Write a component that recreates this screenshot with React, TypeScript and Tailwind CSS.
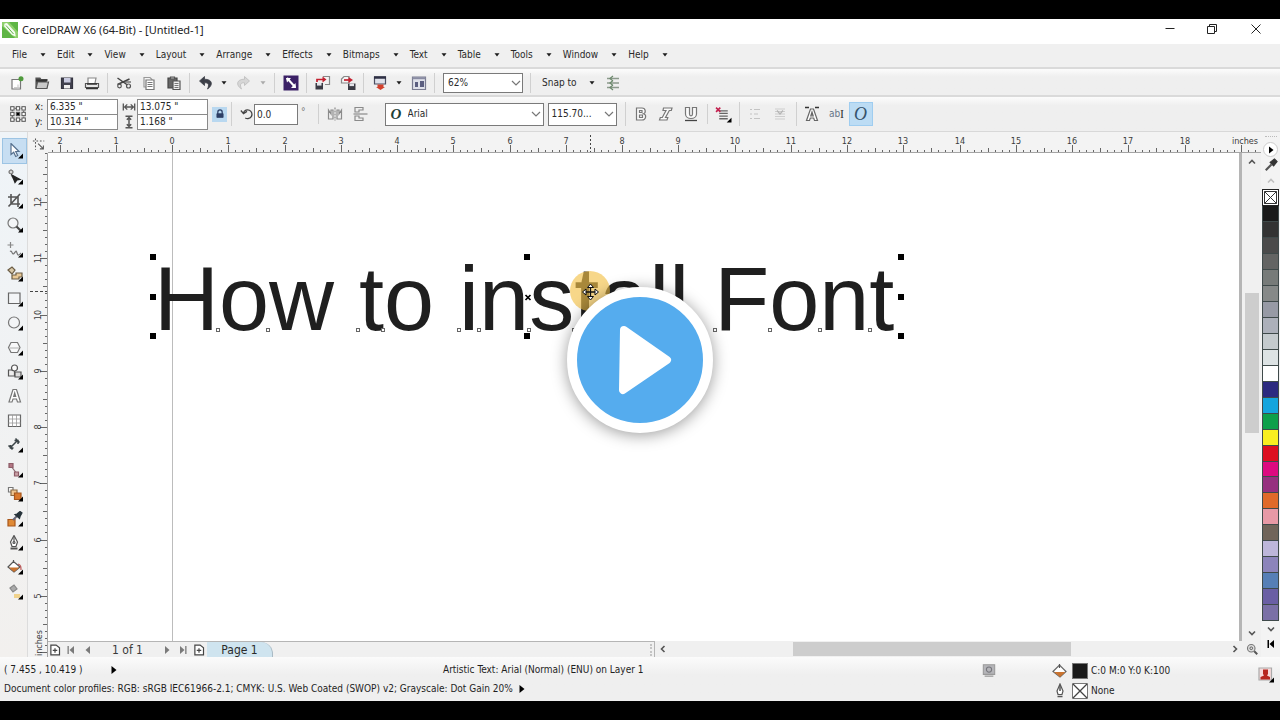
import type { ReactNode } from "react";

const INK = "#555555";
const DARK = "#222222";

type IconProps = { children: ReactNode; className?: string };

function Icon({ children, className = "size-4" }: IconProps) {
  return (
    <svg viewBox="0 0 16 16" className={className} fill="none" stroke={INK} strokeWidth="1.2" aria-hidden="true">
      {children}
    </svg>
  );
}

function Caret({ faded = false }: { faded?: boolean }) {
  return (
    <svg viewBox="0 0 6 4" className="h-1 w-1.5 shrink-0" aria-hidden="true">
      <path d="M0.5 0.3h5L3 3.5z" fill={faded ? "#aaaaaa" : "#1c1c1c"} />
    </svg>
  );
}

function Chevron({ dir, color = "#555555" }: { dir: "up" | "down" | "left" | "right"; color?: string }) {
  const d = {
    up: "M2 6.5 5 3.5 8 6.5",
    down: "M2 3.5 5 6.5 8 3.5",
    left: "M6.5 2 3.5 5 6.5 8",
    right: "M3.5 2 6.5 5 3.5 8",
  }[dir];
  return (
    <svg viewBox="0 0 10 10" className="size-2.5 shrink-0" fill="none" stroke={color} strokeWidth="1.6" aria-hidden="true">
      <path d={d} />
    </svg>
  );
}

function SelectChevron() {
  return (
    <svg viewBox="0 0 10 10" className="size-2.5 shrink-0" fill="none" stroke="#777777" strokeWidth="1.2" aria-hidden="true">
      <path d="M1 3l4 4 4-4" />
    </svg>
  );
}

function Sep({ className = "mx-[3px] h-5" }: { className?: string }) {
  return <span className={`w-px shrink-0 bg-[#d0d0d0] ${className}`} />;
}

function Tool({ label, children, width = "w-[25px]" }: { label: string; children: ReactNode; width?: string }) {
  return (
    <button type="button" aria-label={label} className={`flex h-6 shrink-0 items-center justify-center ${width}`}>
      {children}
    </button>
  );
}

const disk = (x: number, y: number) => (
  <g transform={`translate(${x} ${y})`}>
    <path d="M0 0h7.5v6.5H0z" fill="#3a3a44" stroke="none" />
    <path d="M1.5 0h4.5v2.6H1.5z" fill="#e4e4ea" stroke="none" />
  </g>
);

const menus = ["File", "Edit", "View", "Layout", "Arrange", "Effects", "Bitmaps", "Text", "Table", "Tools", "Window", "Help"];

function TitleBar() {
  return (
    <header className="flex h-[25px] shrink-0 items-center bg-white text-[#222222]">
      <svg viewBox="0 0 16 16" className="mb-1 ml-0.5 size-4" aria-hidden="true">
        <path d="M0 0h16v16H0z" fill="#5fb545" />
        <path d="M0 0h7L16 10v6h-3L0 4z" fill="#8fd06c" />
        <path d="M2.5 1.5 5 1l8 9 .8 4.5L10 13 2 4.2z" fill="#f4fbf0" />
        <path d="m4 3.5 7.5 8.5" stroke="#5fb545" strokeWidth="1" />
      </svg>
      <h1 className="ml-1 pb-[3px] font-['Noto_Sans','Open_Sans',sans-serif] text-[11px] leading-4">CorelDRAW X6 (64-Bit) - [Untitled-1]</h1>
      <div className="mr-0.5 ml-auto flex items-center pb-1.5">
        <button type="button" aria-label="Minimize" className="flex h-5 w-[42px] items-center justify-center">
          <svg viewBox="0 0 12 12" className="size-3" stroke={DARK} aria-hidden="true"><path d="M1.5 5.5h9" /></svg>
        </button>
        <button type="button" aria-label="Restore" className="flex h-5 w-[42px] items-center justify-center">
          <svg viewBox="0 0 12 12" className="size-3" fill="none" stroke={DARK} aria-hidden="true">
            <path d="M1.5 3.5h7v7h-7zM3.5 3.5v-2h7v7h-2" />
          </svg>
        </button>
        <button type="button" aria-label="Close" className="flex h-5 w-[45px] items-center justify-center">
          <svg viewBox="0 0 12 12" className="size-3" stroke={DARK} aria-hidden="true"><path d="m1.5 1.5 9 9m0-9-9 9" /></svg>
        </button>
      </div>
    </header>
  );
}

function MenuBar() {
  return (
    <nav className="flex h-[25px] shrink-0 items-center border-b-2 border-[#dadada] bg-[#f0f0f0] pb-0.5 pl-3">
      {menus.map((name) => (
        <button key={name} type="button" className="flex items-center gap-[13px] pr-[11px]">
          {name}
          <Caret />
        </button>
      ))}
    </nav>
  );
}

function StandardBar() {
  return (
    <div className="flex h-7 shrink-0 items-center border-b-2 border-[#dadada] bg-linear-to-b from-[#fcfcfc] to-[#efefef] to-30% pt-0.5 pl-1">
      <Tool label="New">
        <Icon>
          <path d="M3 4.5h8.500v9.500H3z" fill="#fff" stroke="#777" />
          <path d="M9 9.5v4M5 12.5h6" stroke="#ccc" />
          <circle cx="12" cy="3.8" r="2.5" fill="#4f9a3c" stroke="none" />
        </Icon>
      </Tool>
      <Tool label="Open">
        <Icon>
          <path d="M2 13V3h4l1 1.5h6V6" fill="#555" />
          <path d="M3.5 7h11l-1.5 6.5H2z" fill="#c9c9c9" />
          <path d="M2 5.5h11" stroke="#333" strokeWidth="2" />
        </Icon>
      </Tool>
      <Tool label="Save">
        <Icon>
          <path d="M2.5 3h11v10.5h-11z" fill="#41414e" stroke="#33333f" />
          <path d="M5 3h6.500v4.500H5z" fill="#c9cbe0" stroke="none" />
          <path d="M5 10h6v3.500H5z" fill="#f0f0f0" stroke="none" />
        </Icon>
      </Tool>
      <Tool label="Print">
        <Icon>
          <path d="M4 8V3h8l-1 5" fill="#fff" stroke="#888" />
          <path d="M1.5 8.500h13v4h-13z" fill="#e8e8e8" stroke="#555" />
          <path d="M2 13.500h12M3 9h10" stroke="#333" strokeWidth="1.5" />
        </Icon>
      </Tool>
      <Sep />
      <Tool label="Cut">
        <Icon>
          <path d="m1.5 3 10 7M1.5 9.500l12-5.500" stroke="#444" strokeWidth="1.5" />
          <circle cx="12.500" cy="11" r="2" />
          <circle cx="3.5" cy="11" r="1.8" />
          <path d="M9 7h6" />
        </Icon>
      </Tool>
      <Tool label="Copy">
        <Icon>
          <path d="M3 2.500h6l2 2V12H3z" fill="#f4f4f4" stroke="#999" />
          <path d="M5 5h8v9.500H5z" fill="#fff" stroke="#777" />
          <path d="M6.500 7.500h5m-5 2h5m-5 2h5" stroke="#777" />
        </Icon>
      </Tool>
      <Tool label="Paste">
        <Icon>
          <path d="M2 3h9v10H2z" fill="#666" stroke="#444" />
          <path d="M4.500 2h4v2h-4z" fill="#bbb" />
          <path d="M7 6h7v8.500H7z" fill="#eee" />
          <path d="M8.500 8.500h4m-4 2h4m-4 2h4" stroke="#777" />
        </Icon>
      </Tool>
      <Sep />
      <Tool label="Undo">
        <Icon><path d="M6.500 1.500 1.500 6l5 4.500V7.800c4-.3 5 1.700 3 6.200 6-4 5-9.800-3-9.800z" fill="#3c3f48" stroke="#3c3f48" strokeWidth=".8" /></Icon>
      </Tool>
      <Tool label="Undo history" width="w-3"><Caret /></Tool>
      <Tool label="Redo">
        <Icon><path d="m9.500 1.500 5 4.500-5 4.500V7.800c-4-.3-5 1.700-3 6.200-6-4-5-9.800 3-9.800z" fill="#d6d6d6" stroke="#bbb" strokeWidth=".8" /></Icon>
      </Tool>
      <Tool label="Redo history" width="w-4"><Caret faded /></Tool>
      <Sep />
      <Tool label="Search content">
        <Icon>
          <path d="M.5.5h15v15H.5z" fill="#3b2166" stroke="none" />
          <path d="m4 3 8 9" stroke="#fff" strokeWidth="2" />
          <path d="M3 3h5L4 7.500zM13 13H8l4.500-5z" fill="#fff" stroke="none" />
        </Icon>
      </Tool>
      <Sep />
      <Tool label="Import">
        <Icon>
          {disk(0.5, 8)}
          <path d="M8 1.500h6.500v8H10" fill="#f3f3f3" stroke="#888" />
          <path d="M2 7V4.500h6" stroke="#c3202f" strokeWidth="1.7" />
          <path d="m7.500 1.500 4 3-4 3z" fill="#c3202f" stroke="none" />
        </Icon>
      </Tool>
      <Tool label="Export">
        <Icon>
          {disk(8, 8.5)}
          <path d="M1.500 8V4L4 1.500h5V8z" fill="#f3f3f3" stroke="#888" />
          <path d="M4 5h5" stroke="#c3202f" strokeWidth="1.7" />
          <path d="m8.500 2 4.500 3-4.500 3z" fill="#c3202f" stroke="none" />
        </Icon>
      </Tool>
      <Sep />
      <Tool label="Publish">
        <Icon>
          <path d="M2.500 2h11v7h-11z" fill="#dfe1ea" stroke="#4b4d60" />
          <path d="M2 2.500h12" stroke="#2f3045" strokeWidth="2.5" />
          <path d="M5.500 9.500h6V12h1.500l-4.500 3-4.500-3h1.500z" fill="#d2402c" stroke="none" />
        </Icon>
      </Tool>
      <Tool label="Publish options" width="w-[14px]"><Caret /></Tool>
      <Tool label="Welcome screen">
        <Icon>
          <path d="M1.500 2h13v12.500h-13z" fill="#dfe1ea" stroke="#7b7d92" />
          <path d="M1.500 3.200h13" stroke="#8a8ca3" strokeWidth="2" />
          <path d="M4 7h3v5H4zM9 6h4v6H9z" fill="#5b5e80" stroke="none" />
        </Icon>
      </Tool>
      <Sep />
      <div className="ml-[5px] grid w-20 shrink-0 items-center">
        <select aria-label="Zoom level" className="col-start-1 row-start-1 h-5 appearance-none border border-[#7a7a7a] bg-white pl-1">
          <option>62%</option>
        </select>
        <span className="pointer-events-none col-start-1 row-start-1 mr-0.5 justify-self-end"><SelectChevron /></span>
      </div>
      <Sep className="mx-[7px] h-5" />
      <button type="button" className="ml-1 flex items-center gap-3 whitespace-nowrap">
        Snap to
        <Caret />
      </button>
      <span className="ml-1.5 flex">
        <Tool label="Options">
          <Icon>
            <path d="M2 3.500h12M2 8h12M2 12.500h12" stroke="#8d9a8d" strokeWidth="1.3" />
            <path d="m8 1-3 2.500L8 6m0-.5L5 8l3 2.500M8 10l-3 2.500L8 15" stroke="#6c8a6c" />
          </Icon>
        </Tool>
      </span>
    </div>
  );
}

const field = "h-4 w-[71px] border border-[#8a8a8a] bg-white pl-0.5";

function PropertyBar() {
  return (
    <div className="flex h-[35px] shrink-0 items-center border-b border-[#d8d8d8] bg-linear-to-b from-[#fcfcfc] to-[#efefef] to-25% pl-[5px]">
      <Tool label="Object origin">
        <Icon className="size-[18px]">
          <path d="M3 3h10v10H3z" strokeDasharray="1 1" />
          {[3, 8, 13].flatMap((x) => [3, 8, 13].map((y) => (
            <rect key={`${x}-${y}`} x={x - 1.5} y={y - 1.5} width="3" height="3" fill={x === 8 && y === 8 ? "#000" : "#fff"} strokeWidth=".9" />
          )))}
        </Icon>
      </Tool>
      <div className="ml-[5px] flex flex-col">
        <label className="flex items-center"><span className="w-3">x:</span><input className={field} defaultValue={'6.335 "'} /></label>
        <label className="-mt-px flex items-center"><span className="w-3">y:</span><input className={field} defaultValue={'10.314 "'} /></label>
      </div>
      <div className="ml-1 flex flex-col">
        <label className="flex items-center">
          <Icon className="mr-px size-3.5"><path d="M1.500 4v8m13-8v8M3 8h10M6 5 3 8l3 3m4-6 3 3-3 3" strokeWidth="1.5" /></Icon>
          <input aria-label="Width" className={field} defaultValue={'13.075 "'} />
        </label>
        <label className="-mt-px flex items-center">
          <Icon className="mr-px size-3.5"><path d="M4 1.500h8M4 14.500h8M8 3v10M5.500 5.500 8 3l2.500 2.500m-5 5L8 13l2.500-2.500" strokeWidth="1.7" /></Icon>
          <input aria-label="Height" className={field} defaultValue={'1.168 "'} />
        </label>
      </div>
      <button type="button" aria-label="Lock ratio" className="ml-1 flex size-[15px] items-center justify-center bg-[#b9d8f0]">
        <Icon className="size-2.5"><path d="M4.500 8V5a3.500 3.500 0 0 1 7 0v3" strokeWidth="2" stroke="#2d3f66" /><path d="M3 7.500h10v6H3z" fill="#2d3f66" stroke="#2d3f66" /></Icon>
      </button>
      <Sep className="mx-1 h-6" />
      <label className="ml-1 flex items-center">
        <Icon className="size-[14px]"><path d="M4 6.500a5 5 0 1 1 2 6M1 4l3 3.500L8 5" stroke="#444" strokeWidth="1.5" /></Icon>
        <input aria-label="Rotation" className="h-[21px] w-11 border border-[#7a7a7a] bg-white pl-0.5" defaultValue="0.0" />
        <span className="ml-[3px] pb-1 text-[#777]">°</span>
      </label>
      <Sep className="mr-1 ml-3 h-5" />
      <Tool label="Mirror horizontally"><Icon><path d="M8 1.500v13" strokeDasharray="2 1" stroke="#888" /><path d="M6 4v9H1.500V4L4 8V4zM10 4v9h4.500V4L12 8V4z" stroke="#8a8a8a" /></Icon></Tool>
      <Tool label="Mirror vertically"><Icon><path d="M1.500 8h14" stroke="#888" /><path d="M3 6V1.500h8V4H7v2zM3 10v4.500h8V12H7v-2z" stroke="#8a8a8a" /></Icon></Tool>
      <div className="ml-3 grid w-[159px] shrink-0 items-center">
        <select aria-label="Font" className="col-start-1 row-start-1 h-[23px] appearance-none border border-[#7a7a7a] bg-white pl-[22px]">
          <option>Arial</option>
        </select>
        <span className="pointer-events-none col-start-1 row-start-1 ml-1.5 font-['Liberation_Serif',serif] text-[15px] leading-4 font-bold text-[#1d4038] italic">O</span>
        <span className="pointer-events-none col-start-1 row-start-1 mr-[3px] justify-self-end"><SelectChevron /></span>
      </div>
      <div className="ml-1 grid w-[69px] shrink-0 items-center">
        <select aria-label="Font size" className="col-start-1 row-start-1 h-[23px] appearance-none border border-[#7a7a7a] bg-white pl-[3px]">
          <option>115.70...</option>
        </select>
        <span className="pointer-events-none col-start-1 row-start-1 mr-[3px] justify-self-end"><SelectChevron /></span>
      </div>
      <Sep className="mr-[3px] ml-2 h-6" />
      <Tool label="Bold"><Icon><path d="M3.500 2h5.500c4 0 4 5 1.500 5.800C14 9 13 14 9 14H3.500zM6.500 4.500v2h2.500v-2zM6.500 9v2.500h3V9z" fill="#fafafa" stroke="#777" /></Icon></Tool>
      <Tool label="Italic"><Icon><path d="M5.500 2H14l-.7 2.500h-2L7.500 11.500h2.300L9 14H1.500l.8-2.500h2L8 4.500H5z" fill="#fafafa" stroke="#777" /></Icon></Tool>
      <Tool label="Underline"><Icon><path d="M2.500 1.500h4V8c0 2.500 3 2.500 3 0V1.500h4V8c0 6-11 6-11 0z" fill="#fafafa" stroke="#777" /><path d="M2 14.500h12" stroke="#444" strokeWidth="1.3" /></Icon></Tool>
      <Sep className="mx-[3px] h-5" />
      <Tool label="Text alignment">
        <Icon className="size-[17px]"><path d="M4 4.500h8M4 7h8M4 9.500h8M4 12h8" stroke="#666" /><path d="m1 1.500 4 4m0-4-4 4" stroke="#c3204f" strokeWidth="1.5" /><path d="M15.500 11v4.500H11z" fill="#000" stroke="none" /></Icon>
      </Tool>
      <Sep className="mx-[3px] h-6" />
      <Tool label="Bullets"><Icon><path d="M3 3.500h2m2 0h6M3 8h2m2 0h4M3 12.500h2m2 0h6" stroke="#c3c3c3" /></Icon></Tool>
      <Tool label="Drop cap"><Icon><path d="M3 3h10M3 5.500h10M3 8h10M3 10.500h10M3 13h10" stroke="#cdcdcd" /><path d="M5 4.500 8 8l3-3.500" stroke="#b5b5b5" /></Icon></Tool>
      <Sep className="mx-[3px] h-6" />
      <Tool label="Character formatting">
        <Icon><path d="M6.500 3h3l4 11.500h-3l-.8-2.500H6.300l-.8 2.500h-3zM8 6l-1.200 4h2.400z" fill="#fff" stroke="#666" /><path d="M1 1.500h4m6 0h4" stroke="#333" strokeWidth="1.6" /></Icon>
      </Tool>
      <button type="button" aria-label="Edit text" className="flex size-6 items-center justify-center text-[#667788]">ab<span className="font-['Liberation_Serif',serif] text-[12px] text-[#333333]">I</span></button>
      <button type="button" aria-label="Character properties" className="flex size-6 items-center justify-center border border-[#9fcdf0] bg-[#bcdcf4] font-['Liberation_Serif',serif] text-[18px] leading-5 text-[#36536b] italic">O</button>
    </div>
  );
}

const corner = <path d="M16 10.500V15.500H11z" fill="#000" stroke="none" />;

const toolbox: { name: string; art: ReactNode; flyout: boolean }[] = [
  { name: "Pick", flyout: true, art: <path d="M4 .5v11l2.700-2.300 2 4.300 2-1-2-4H12z" fill="#fff" stroke="#56708e" /> },
  { name: "Shape", flyout: true, art: <><path d="M4 0v4c0 5 3 5 4 8M1 3h6" stroke="#888" /><path d="M2.500 1.500h3v3h-3z" fill="#ddd" stroke="#888" /><path d="m5 6 3 7.500 2-2.500 3-.5z" fill="#222" stroke="#222" /></> },
  { name: "Crop", flyout: true, art: <path d="M4 1v10h9M1 4h10v10M1.500 13.500 13 1" strokeWidth="1.6" /> },
  { name: "Zoom", flyout: true, art: <><circle cx="6" cy="6" r="5" fill="#f3f5f7" stroke="#777" /><path d="m9.500 9.500 4 4" stroke="#444" strokeWidth="2.2" /></> },
  { name: "Freehand", flyout: true, art: <><path d="M3.500 0v6M.5 3h6" stroke="#888" /><path d="M3 9.500c2-2 2 4 4 2s2-4 3-.500 2 2 4 0" stroke="#777" /></> },
  { name: "Smart fill", flyout: true, art: <><path d="m1 4 4-3 3 3-3 4z" fill="#d8c8a8" stroke="#6b5d45" /><path d="M9 7h6v4h-3v2H5V9h4z" fill="#e8c896" stroke="#6b5d45" /></> },
  { name: "Rectangle", flyout: true, art: <path d="M1.500 2h11.500v10.500H1.500z" fill="#f3f5f7" stroke="#666" /> },
  { name: "Ellipse", flyout: true, art: <circle cx="7" cy="7.500" r="5.500" fill="#f3f5f7" stroke="#777" /> },
  { name: "Polygon", flyout: true, art: <><path d="M4 2.500h6.500L13 7.500l-2.500 5H4l-2.500-5z" fill="#f8f9fa" stroke="#777" /><path d="M2.500 8h9.500" stroke="#bbb" /></> },
  { name: "Basic shapes", flyout: true, art: <><path d="M1.500 6h6v6h-6z" fill="#eee" /><circle cx="7.500" cy="4" r="3" fill="#fafafa" /><path d="M8 8h6v5H8z" fill="#ddd" /></> },
  { name: "Text", flyout: false, art: <path d="M6 1.500h3.500L13.500 14h-3l-1-3H6l-1 3H2zM7.700 5 6.700 8.500h2z" fill="#fff" stroke="#777" /> },
  { name: "Table", flyout: false, art: <><path d="M1.500 2h12v11.500h-12z" fill="#fff" stroke="#666" /><path d="M5.500 2v11.500m4-11.500v11.500M1.500 6h12m-12 4h12" stroke="#999" strokeWidth=".8" /></> },
  { name: "Dimension", flyout: true, art: <path d="m3 11 8-8M1.500 8.500l4 4M8.500 1.500l4 4M3.500 8v3h3M7.500 3.500h3.500V7" stroke="#3c4548" strokeWidth="1.5" /> },
  { name: "Connector", flyout: true, art: <><path d="m4 4 6 8" stroke="#8a6b72" /><path d="M2 1.500h4v4H2z" fill="#b27683" stroke="#8d5c67" /><path d="M7.500 10h4v4h-4z" fill="#c9a0a6" stroke="#8d5c67" /></> },
  { name: "Blend", flyout: true, art: <><path d="M1.500 1.500H6V6H1.500z" fill="#fff" stroke="#777" /><path d="M4 4h6v5.500H4z" fill="#efc58f" stroke="#8b6a42" /><path d="M7.500 7H14v6.500H7.500z" fill="#d9782b" stroke="#a8561a" /></> },
  { name: "Eyedropper", flyout: true, art: <><path d="M1 8.500h7V15H1z" fill="#e08a35" stroke="#a8561a" /><path d="m6 9 6-6" stroke="#667" strokeWidth="2" /><path d="M8 3.500 10 3l3-2.500L15 2l-2 3.500-.5 2z" fill="#26323a" stroke="#26323a" /></> },
  { name: "Outline", flyout: true, art: <><path d="M7 .5 3.500 7l1.500 4.500h4L10.500 7z" fill="#fff" /><path d="M7 1v6" /><circle cx="7" cy="7.500" r="1" /><path d="M3.500 13.500h7" strokeWidth="2" /></> },
  { name: "Fill", flyout: true, art: <><path d="M6.500 1v3M1 8l5.500-5.500L13 8l-6 5z" fill="#fff" /><path d="M2 8.500h10.500L7 13z" fill="#c9732f" stroke="none" /><path d="M11 5c3 1 3 3 3 6" stroke="#b55" /></> },
  { name: "Interactive fill", flyout: true, art: <><path d="m3 4 4-3 3 4-4 3z" fill="#aaa" stroke="#888" /><path d="M7 10h6v4H7z" fill="#f0d28c" stroke="none" /></> },
];

function Toolbox() {
  return (
    <aside className="w-7 shrink-0 border-r border-[#dcdcdc] bg-linear-to-b from-[#eff4f8] to-[#f2f0ee] pt-1.5">
      <div className="flex h-[466px] flex-col">
        {toolbox.map((t, i) => (
          <button
            key={t.name}
            type="button"
            aria-label={t.name}
            className={`ml-0.5 flex w-[25px] flex-1 items-center justify-center ${i === 0 ? "border border-[#9cc4e4] bg-[#c7def2]" : ""}`}
          >
            <Icon className="size-4">
              {t.art}
              {t.flyout ? corner : null}
            </Icon>
          </button>
        ))}
      </div>
    </aside>
  );
}

const UNIT = 56.25;
const labelClass = "fill-[#3c3c3c] text-[9px]";

function HRuler() {
  const zero = 124;
  const ticks = Array.from({ length: 173 }, (_, i) => i - 17);
  const inches = Array.from({ length: 21 }, (_, i) => i - 2);
  return (
    <svg className="block h-[21px] w-full shrink-0 overflow-hidden bg-[#f3f3f3]" aria-hidden="true">
      <rect y="20" width="100%" height="1" fill="#a5a5a5" />
      {ticks.map((t) => {
        const x = Math.round(zero + (t * UNIT) / 8);
        const h = t % 8 === 0 ? 7 : t % 4 === 0 ? 4 : 2;
        return <rect key={t} x={x} y={20 - h} width="1" height={h} fill="#666" />;
      })}
      {inches.map((n) => (
        <text key={n} x={Math.round(zero + n * UNIT)} y="12" textAnchor="middle" className={labelClass}>
          {Math.abs(n)}
        </text>
      ))}
      <text x="1197" y="12" textAnchor="middle" className={labelClass}>inches</text>
      <path d="M542.5 3v17" stroke="#444" strokeDasharray="2 2" />
    </svg>
  );
}

function VRuler() {
  const twelve = 49;
  const ticks = Array.from({ length: 75 }, (_, i) => i - 7);
  return (
    <svg className="block min-h-0 w-full flex-1 overflow-hidden bg-[#f3f3f3]" aria-hidden="true">
      <rect x="19" width="1" height="100%" fill="#a5a5a5" />
      {ticks.map((t) => {
        const y = Math.round(twelve + (t * UNIT) / 8);
        const w = t % 8 === 0 ? 7 : t % 4 === 0 ? 4 : 2;
        return <rect key={t} x={19 - w} y={y} width={w} height="1" fill="#666" />;
      })}
      {[12, 11, 10, 9, 8, 7, 6, 5].map((n) => {
        const y = Math.round(twelve + (12 - n) * UNIT);
        return (
          <text key={n} x="13" y={y} transform={`rotate(-90 13 ${y})`} textAnchor="middle" className={labelClass}>{n}</text>
        );
      })}
      <text x="14" y="490" transform="rotate(-90 14 490)" textAnchor="middle" className={labelClass}>inches</text>
      <path d="M2 138.5h17" stroke="#444" strokeDasharray="3 2" />
    </svg>
  );
}

const handles = [
  [102, 101], [102, 141], [102, 180],
  [476, 101], [476, 180],
  [850, 101], [850, 141], [850, 180],
];
const nodes = [170, 220, 310, 335, 411, 431, 481, 526, 667, 722, 772, 822];

function Canvas() {
  return (
    <main className="relative min-w-0 flex-1 overflow-hidden border-r-3 border-[#b5b5b5] bg-white">
      <span className="absolute inset-y-0 left-[124px] w-px bg-[#bcbcbc]" />
      <p className="absolute top-24 left-[106px] font-['Liberation_Sans',Arial,sans-serif] text-[90px] leading-[100px] whitespace-nowrap text-[#1f1f1f]">
        How to install Font
      </p>
      <svg className="absolute top-0 left-0 h-full w-full" aria-hidden="true">
        {handles.map(([x, y]) => <rect key={`${x}-${y}`} x={x} y={y} width="6" height="6" fill="#000" />)}
        {nodes.map((x) => <rect key={x} x={x - 1.5} y="175.5" width="3" height="3" fill="#fff" stroke="#666" />)}
        <path d="m477.5 142 5 5m0-5-5 5" stroke="#000" strokeWidth="1.7" />
        <circle cx="542" cy="138" r="20" fill="#f2c14a" fillOpacity=".65" />
        <path d="M542.5 132v14M535.5 139h14" stroke="#111" strokeWidth="1.3" />
        <path d="m542.5 131 3 3.500h-6zM542.5 147l3-3.500h-6zM534.500 139l3.500-3v6zM550.500 139l-3.500-3v6z" fill="#fff" stroke="#111" />
      </svg>
    </main>
  );
}

function PageTabs() {
  const nav = "flex h-4 items-center justify-center";
  const arrow = (d: string) => <svg viewBox="0 0 8 8" className="size-2" fill="#7a7a7a" aria-hidden="true"><path d={d} /></svg>;
  const addPage = <Icon className="size-3"><path d="M2.500 1.500h7L14 5v9.500H2.500z" strokeWidth="1.6" fill="#fff" stroke="#444" /><path d="M8 5.500v6M5 8.500h6" strokeWidth="1.6" stroke="#444" /></Icon>;
  return (
    <div className="flex h-4 shrink-0 items-center bg-[#f0f0f0] text-[12px]">
      <div className="flex h-4 w-[607px] items-center border-t border-r border-[#b5b5b5]">
        <button type="button" aria-label="Add page before" className={`${nav} w-3.5`}>{addPage}</button>
        <button type="button" aria-label="First page" className={`${nav} w-[18px]`}>{arrow("M.5 0h1.300v8H.5zM7 0v8L2.500 4z")}</button>
        <button type="button" aria-label="Previous page" className={`${nav} w-4`}>{arrow("M6 0v8L1.500 4z")}</button>
        <span className="ml-4 text-[#3a3a3a]">1 of 1</span>
        <button type="button" aria-label="Next page" className={`${nav} ml-auto w-4`}>{arrow("M2 0v8l4.500-4z")}</button>
        <button type="button" aria-label="Last page" className={`${nav} w-4`}>{arrow("M6.200 0h1.300v8H6.200zM1 0v8l4.500-4z")}</button>
        <button type="button" aria-label="Add page after" className={`${nav} w-4`}>{addPage}</button>
        <button type="button" className="h-4 w-[66px] rounded-tr-xl border-r border-[#a9bac4] bg-[#cfe4ef] leading-4">Page 1</button>
        <span className="ml-[377px] h-3 border-l-2 border-dotted border-[#c4c4c4] pr-0.5" />
      </div>
      <div className="flex h-4 flex-1 items-center">
        <button type="button" aria-label="Scroll left" className={`${nav} w-4`}><Chevron dir="left" /></button>
        <div className="flex h-4 flex-1 items-center"><span className="ml-[22%] h-3.5 w-1/2 bg-[#cdcdcd]" /></div>
        <button type="button" aria-label="Scroll right" className={`${nav} w-4`}><Chevron dir="right" /></button>
        <button type="button" aria-label="Navigator" className={`${nav} w-[18px]`}>
          <Icon className="size-3"><circle cx="7" cy="7" r="5" fill="#ddd" stroke="#777" strokeWidth="1.5" /><circle cx="7" cy="7" r="1.8" /><path d="m11 11 4 4" strokeWidth="2.5" /></Icon>
        </button>
      </div>
    </div>
  );
}

const swatches = [
  "bg-[#1a1a1a]", "bg-[#333333]", "bg-[#4b4b4b]", "bg-[#636463]", "bg-[#777b79]", "bg-[#868988]", "bg-[#979aa5]", "bg-[#acb0ba]",
  "bg-[#c4cacd]", "bg-[#dde3e4]", "bg-white", "bg-[#2c2a80]", "bg-[#14a5dd]", "bg-[#0da04b]", "bg-[#f8ef20]", "bg-[#dc0f20]",
  "bg-[#dd0a80]", "bg-[#96307f]", "bg-[#e06a2a]", "bg-[#e799a6]", "bg-[#70645a]", "bg-[#bdb6da]", "bg-[#8c84bb]", "bg-[#567fb6]",
  "bg-[#6a5fa4]", "bg-[#7a70a6]",
];

function Palette() {
  return (
    <aside className="flex w-[19px] shrink-0 flex-col items-center bg-[#f3f3f3] pt-1">
      <span className="h-1.5 w-3 border-t border-dotted border-[#bbb]" />
      <button type="button" aria-label="Palette menu" className="flex size-[15px] items-center justify-center rounded-full border border-[#ccc] bg-white">
        <svg viewBox="0 0 8 8" className="size-2" aria-hidden="true"><path d="M2 .5v7L6.500 4z" /></svg>
      </button>
      <Icon className="my-px size-3.5"><path d="m2 14 6.500-6.500" strokeWidth="2.5" /><path d="m7 5 4 4 4-5-3-3z" fill="#333" stroke="#333" /></Icon>
      <button type="button" aria-label="Scroll palette up" className="flex h-4 items-center"><Chevron dir="up" color="#c0c0c0" /></button>
      <button type="button" aria-label="No color" className="h-[17px] w-[17px] shrink-0 border border-[#222] bg-white">
        <svg viewBox="0 0 15 15" className="size-[15px]" fill="none" stroke="#333" aria-hidden="true"><path d="M1.500 1.500h12v12h-12zm0 0 12 12m0-12-12 12" /></svg>
      </button>
      <div className="flex h-[415px] w-[17px] shrink-0 flex-col">
        {swatches.map((c) => (
          <button key={c} type="button" aria-label="Color swatch" className={`flex-1 border-x border-b border-[#3f4a4a] ${c}`} />
        ))}
      </div>
      <button type="button" aria-label="Scroll palette down" className="mt-[3px]"><Chevron dir="down" /></button>
      <button type="button" aria-label="Expand palette" className="mt-1.5">
        <svg viewBox="0 0 8 8" className="size-2" aria-hidden="true"><path d="M.5 0H2v8H.5zM7 0v8L2.500 4z" /></svg>
      </button>
    </aside>
  );
}

function StatusBar() {
  return (
    <footer className="flex h-11 shrink-0 bg-linear-to-b from-[#fbfbfb] to-[#efefef] to-40% text-[#1f1f1f]">
      <div className="flex min-w-0 flex-1 flex-col pt-[3px] pl-1">
        <div className="flex h-5 items-center whitespace-nowrap">
          <span className="w-[107px]">( 7.455 , 10.419 )</span>
          <svg viewBox="0 0 6 8" className="h-2 w-1.5" aria-hidden="true"><path d="M.5 0v8L5.500 4z" /></svg>
          <span className="ml-[326px]">Artistic Text: Arial (Normal) (ENU) on Layer 1</span>
          <Icon className="mr-14 ml-auto size-3.5"><path d="M1.500 2h13v11h-13z" fill="#b4b4b8" stroke="#999" /><circle cx="8" cy="7.500" r="3" stroke="#77777d" /><path d="M3 15h10" stroke="#888" /></Icon>
        </div>
        <div className="flex h-[18px] items-center gap-1.5 whitespace-nowrap">
          Document color profiles: RGB: sRGB IEC61966-2.1; CMYK: U.S. Web Coated (SWOP) v2; Grayscale: Dot Gain 20%
          <svg viewBox="0 0 6 8" className="h-2 w-1.5" aria-hidden="true"><path d="M.5 0v8L5.500 4z" /></svg>
        </div>
      </div>
      <div className="mr-1.5 flex w-[222px] items-center">
        <div className="flex w-[190px] flex-col pt-1">
          <div className="flex h-5 items-center">
            <Icon className="mr-1 size-4"><path d="M1 8.500 7.500 2l6.500 6.500-6 5.500z" fill="#fff" stroke="#666" /><path d="M2 9h11.500L8 14z" fill="#c9732f" stroke="none" /><path d="M7.500 1v4" /></Icon>
            <span className="mr-[3px] size-4 border border-[#777] bg-[#1a1a1a]" />
            C:0 M:0 Y:0 K:100
          </div>
          <div className="flex h-5 items-center">
            <Icon className="mr-1 size-4"><path d="M8 1 5 8l1 3.500h4L11 8z" fill="#fff" /><path d="M8 2v6M5.500 13.500h5" strokeWidth="1.5" /></Icon>
            <svg viewBox="0 0 16 16" className="mr-[3px] size-4" fill="#fff" stroke="#444" aria-hidden="true"><path d="M.5.5h15v15H.5z" stroke="#777" /><path d="m1 1 14 14m0-14L1 15" strokeWidth="1.3" /></svg>
            None
          </div>
        </div>
        <button type="button" aria-label="Color proof" className="mb-2 ml-auto">
          <Icon className="size-4"><path d="M1 1h12.500v12H1z" fill="#f6dada" stroke="#aaa" /><path d="M5 2.500h5V7L9 8.500l3 1.500v2.500H2.500V10L6 8.500 5 7z" fill="#b8261f" stroke="none" />{corner}</Icon>
        </button>
      </div>
    </footer>
  );
}

export default function App() {
  return (
    <div className="relative flex h-screen min-h-[720px] flex-col overflow-hidden bg-black py-[19px] font-['DejaVu_Sans_Condensed','Noto_Sans',sans-serif] text-[10px] leading-4 text-[#2a2a2a]">
      <TitleBar />
      <MenuBar />
      <StandardBar />
      <PropertyBar />
      <div className="flex min-h-0 flex-1">
        <Toolbox />
        <div className="flex w-5 shrink-0 flex-col bg-[#f3f3f3]">
          <Icon className="mt-1 ml-1 h-[17px] w-3.5"><path d="M4 1v13M1 4h13" strokeDasharray="2 2" /><path d="m7 7 6 6m-4 0h4V9" /></Icon>
          <VRuler />
        </div>
        <div className="flex min-w-0 flex-1 flex-col">
          <HRuler />
          <div className="flex min-h-0 flex-1">
            <Canvas />
            <div className="flex w-[19px] shrink-0 flex-col items-center bg-[#f0f0f0]">
              <button type="button" aria-label="Scroll up" className="flex h-[17px] items-center"><Chevron dir="up" /></button>
              <div className="flex w-3.5 flex-1 flex-col"><span className="h-[27%]" /><span className="h-[31%] bg-[#cdcdcd]" /></div>
              <button type="button" aria-label="Scroll down" className="flex h-[17px] items-center"><Chevron dir="down" /></button>
            </div>
          </div>
          <PageTabs />
        </div>
        <Palette />
      </div>
      <StatusBar />
      <div className="pointer-events-none absolute inset-0 flex items-center justify-center">
        <button type="button" aria-label="Play video" className="pointer-events-auto flex size-[146px] items-center justify-center rounded-full border-[10px] border-white bg-[#55acee] shadow-[0_2px_16px_rgba(0,0,0,0.4)]">
          <svg viewBox="0 0 60 76" className="ml-2 h-[76px] w-[60px]" aria-hidden="true">
            <path d="M10 8 53 38 9 68z" fill="#fff" stroke="#fff" strokeWidth="8" strokeLinejoin="round" />
          </svg>
        </button>
      </div>
    </div>
  );
}
